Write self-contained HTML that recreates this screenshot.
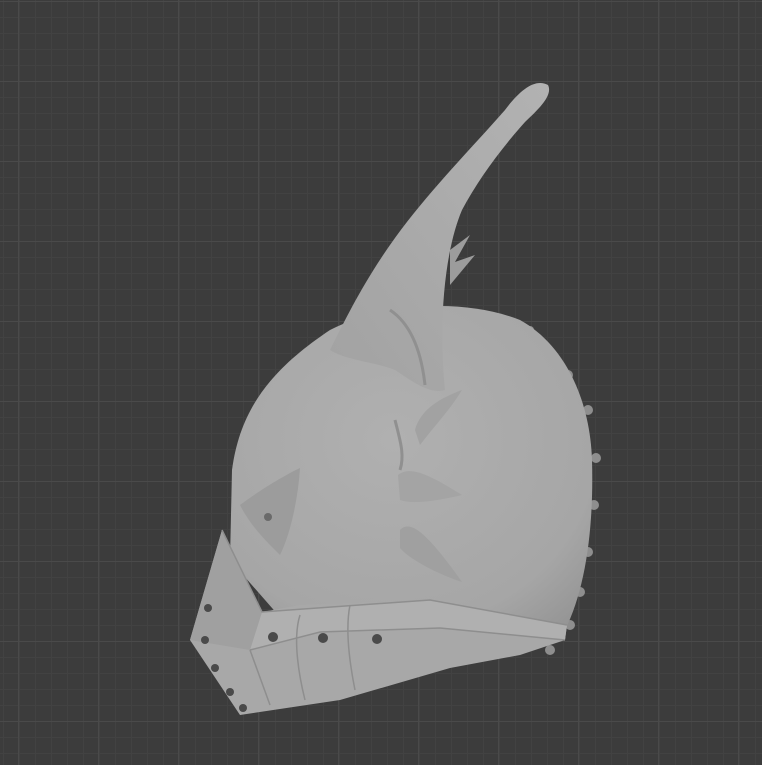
<!DOCTYPE html>
<html><head><style>
html,body{margin:0;padding:0;width:762px;height:765px;overflow:hidden;background:#3c3c3c}
svg{display:block}
</style></head><body>
<svg width="762" height="765" viewBox="0 0 762 765" xmlns="http://www.w3.org/2000/svg">
<defs>
<pattern id="g" x="3" y="1" width="16" height="16" patternUnits="userSpaceOnUse">
<path d="M0 0.5H16M0.5 0V16" stroke="#424242" stroke-width="1" fill="none"/>
</pattern>
<pattern id="G" x="18" y="1" width="80" height="80" patternUnits="userSpaceOnUse">
<path d="M0 0.5H80M0.5 0V80" stroke="#4a4a4a" stroke-width="1" fill="none"/>
</pattern>
<radialGradient id="dome" cx="0.45" cy="0.4" r="0.75">
<stop offset="0" stop-color="#b0b0b0"/><stop offset="0.75" stop-color="#a6a6a6"/><stop offset="1" stop-color="#939393"/>
</radialGradient>
<linearGradient id="horn" x1="0" y1="1" x2="1" y2="0">
<stop offset="0" stop-color="#a2a2a2"/><stop offset="1" stop-color="#b2b2b2"/>
</linearGradient>
</defs>
<rect width="762" height="765" fill="url(#g)"/>
<rect width="762" height="765" fill="url(#G)"/>
<g fill="#8e8e8e">
<circle cx="530" cy="330" r="4"/><circle cx="568" cy="375" r="5"/><circle cx="588" cy="410" r="5"/>
<circle cx="596" cy="458" r="5"/><circle cx="594" cy="505" r="5"/><circle cx="588" cy="552" r="5"/>
<circle cx="580" cy="592" r="5"/><circle cx="570" cy="625" r="5"/><circle cx="550" cy="650" r="5"/>
</g>
<path d="M232 470 C240 410 270 370 330 330 C390 300 470 300 520 320 C565 345 590 400 592 460 C594 530 585 590 565 630 L450 640 L300 640 L230 560 Z" fill="url(#dome)"/>
<path d="M222 530 L190 640 L240 715 L340 700 L450 668 L520 655 L565 640 L567 625 L430 600 L300 605 L262 612 Z" fill="#a8a8a8"/>
<path d="M262 612 L430 600 L567 625 L565 640 L440 628 L320 632 L250 650 Z" fill="#b0b0b0"/>
<path d="M222 530 L262 612 L250 650 L190 640 Z" fill="#a0a0a0"/>
<g stroke="#8e8e8e" stroke-width="1.5" fill="none">
<path d="M222 530 L262 612 L430 600 L567 625"/>
<path d="M250 650 L320 632 L440 628 L565 640"/>
<path d="M250 650 L270 705"/><path d="M300 615 C292 640 300 680 305 700"/><path d="M350 605 C345 630 350 665 355 690"/>
</g>
<g fill="#4a4a4a">
<circle cx="208" cy="608" r="4"/><circle cx="205" cy="640" r="4"/><circle cx="215" cy="668" r="4"/><circle cx="230" cy="692" r="4"/><circle cx="243" cy="708" r="4"/>
<circle cx="273" cy="637" r="5"/><circle cx="323" cy="638" r="5"/><circle cx="377" cy="639" r="5"/>
</g>
<path d="M240 505 C260 490 285 475 300 468 C298 500 290 535 280 555 C265 540 250 525 240 505 Z" fill="#9c9c9c"/>
<circle cx="268" cy="517" r="4" fill="#6a6a6a"/>
<path d="M330 350 C345 320 362 285 390 245 C425 195 470 150 505 110 C520 90 535 78 548 85 C553 95 540 108 525 122 C500 150 478 180 462 210 C445 250 438 320 445 390 C430 395 410 380 395 370 C375 362 345 360 330 350 Z" fill="url(#horn)"/>
<path d="M390 310 C405 320 420 340 425 385" stroke="#909090" stroke-width="3" fill="none"/>
<path d="M450 250 L470 235 L455 262 L475 255 L450 285 Z" fill="#9c9c9c"/>
<path d="M415 430 C420 410 440 398 462 390 C450 410 435 425 420 445 Z" fill="#a2a2a2"/>
<path d="M398 475 C410 465 430 475 462 495 C440 500 415 505 400 500 Z" fill="#a4a4a4"/>
<path d="M400 530 C410 520 425 530 462 582 C440 575 410 560 400 548 Z" fill="#a0a0a0"/>
<path d="M395 420 C400 440 405 455 400 470" stroke="#909090" stroke-width="3" fill="none"/>
</svg>
</body></html>
